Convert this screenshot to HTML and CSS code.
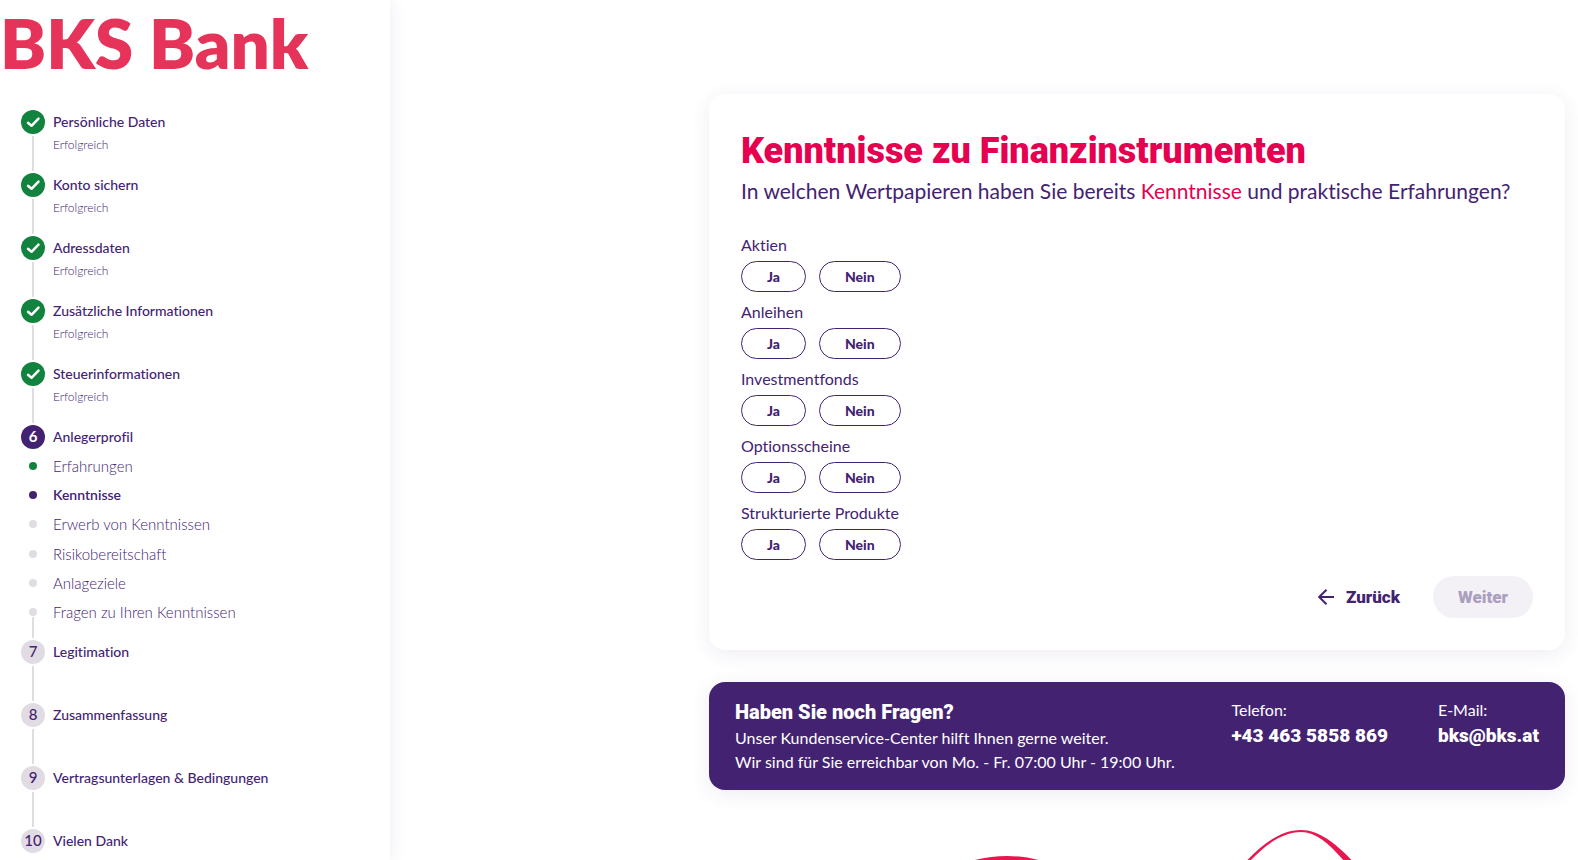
FILE: index.html
```html
<!DOCTYPE html>
<html lang="de">
<head>
    <meta charset="UTF-8">
    <meta name="viewport" content="width=device-width, initial-scale=1.0">
    <title>BKS Bank - Kenntnisse zu Finanzinstrumenten</title>
    <link rel="stylesheet" href="styles.css">
</head>
<body>
    <aside class="sidebar">
        <div class="logo">BKS Bank</div>
        <ol class="steps">
            <li class="step done">
                <span class="step-icon"><svg viewBox="0 0 24 24"><path d="M7 12.800l3.500 3 7-7.200"/></svg></span>
                <div class="step-text">
                    <span class="step-title">Persönliche Daten</span>
                    <span class="step-status">Erfolgreich</span>
                </div>
            </li>
            <li class="step done">
                <span class="step-icon"><svg viewBox="0 0 24 24"><path d="M7 12.800l3.500 3 7-7.200"/></svg></span>
                <div class="step-text">
                    <span class="step-title">Konto sichern</span>
                    <span class="step-status">Erfolgreich</span>
                </div>
            </li>
            <li class="step done">
                <span class="step-icon"><svg viewBox="0 0 24 24"><path d="M7 12.800l3.500 3 7-7.200"/></svg></span>
                <div class="step-text">
                    <span class="step-title">Adressdaten</span>
                    <span class="step-status">Erfolgreich</span>
                </div>
            </li>
            <li class="step done">
                <span class="step-icon"><svg viewBox="0 0 24 24"><path d="M7 12.800l3.500 3 7-7.200"/></svg></span>
                <div class="step-text">
                    <span class="step-title">Zusätzliche Informationen</span>
                    <span class="step-status">Erfolgreich</span>
                </div>
            </li>
            <li class="step done">
                <span class="step-icon"><svg viewBox="0 0 24 24"><path d="M7 12.800l3.500 3 7-7.200"/></svg></span>
                <div class="step-text">
                    <span class="step-title">Steuerinformationen</span>
                    <span class="step-status">Erfolgreich</span>
                </div>
            </li>
            <li class="step active">
                <span class="step-icon">6</span>
                <div class="step-text">
                    <span class="step-title">Anlegerprofil</span>
                </div>
                <ul class="substeps">
                    <li class="substep visited">Erfahrungen</li>
                    <li class="substep current">Kenntnisse</li>
                    <li class="substep">Erwerb von Kenntnissen</li>
                    <li class="substep">Risikobereitschaft</li>
                    <li class="substep">Anlageziele</li>
                    <li class="substep">Fragen zu Ihren Kenntnissen</li>
                </ul>
            </li>
            <li class="step">
                <span class="step-icon">7</span>
                <div class="step-text"><span class="step-title">Legitimation</span></div>
            </li>
            <li class="step">
                <span class="step-icon">8</span>
                <div class="step-text"><span class="step-title">Zusammenfassung</span></div>
            </li>
            <li class="step">
                <span class="step-icon">9</span>
                <div class="step-text"><span class="step-title">Vertragsunterlagen &amp; Bedingungen</span></div>
            </li>
            <li class="step">
                <span class="step-icon">10</span>
                <div class="step-text"><span class="step-title">Vielen Dank</span></div>
            </li>
        </ol>
    </aside>

    <main class="content">
        <form class="card">
            <h1>Kenntnisse zu Finanzinstrumenten</h1>
            <p class="question">In welchen Wertpapieren haben Sie bereits <a href="#">Kenntnisse</a> und praktische Erfahrungen?</p>

            <fieldset>
                <legend>Aktien</legend>
                <div class="choices">
                    <button type="button" class="choice">Ja</button>
                    <button type="button" class="choice">Nein</button>
                </div>
            </fieldset>
            <fieldset>
                <legend>Anleihen</legend>
                <div class="choices">
                    <button type="button" class="choice">Ja</button>
                    <button type="button" class="choice">Nein</button>
                </div>
            </fieldset>
            <fieldset>
                <legend>Investmentfonds</legend>
                <div class="choices">
                    <button type="button" class="choice">Ja</button>
                    <button type="button" class="choice">Nein</button>
                </div>
            </fieldset>
            <fieldset>
                <legend>Optionsscheine</legend>
                <div class="choices">
                    <button type="button" class="choice">Ja</button>
                    <button type="button" class="choice">Nein</button>
                </div>
            </fieldset>
            <fieldset>
                <legend>Strukturierte Produkte</legend>
                <div class="choices">
                    <button type="button" class="choice">Ja</button>
                    <button type="button" class="choice">Nein</button>
                </div>
            </fieldset>

            <div class="actions">
                <button type="button" class="back">
                    <svg viewBox="0 0 16 16"><path d="M16 8H1M8.500.7L1.200 8l7.300 7.300"/></svg>
                    Zurück
                </button>
                <button type="submit" class="next" disabled>Weiter</button>
            </div>
        </form>

        <section class="help">
            <div class="help-text">
                <h2>Haben Sie noch Fragen?</h2>
                <p>Unser Kundenservice-Center hilft Ihnen gerne weiter.</p>
                <p>Wir sind für Sie erreichbar von Mo. - Fr. 07:00 Uhr - 19:00 Uhr.</p>
            </div>
            <div class="contact">
                <span>Telefon:</span>
                <a href="tel:+434635858869">+43 463 5858 869</a>
            </div>
            <div class="contact">
                <span>E-Mail:</span>
                <a href="mailto:bks@bks.at">bks@bks.at</a>
            </div>
        </section>

        <svg class="ribbon" viewBox="0 0 856 38">
            <path d="M225 52C250 41 275 34 298 34S345 41 370 52Z"/>
            <path d="M526 52C546 28 568 8 592 8C616 8 640 33 660 59L650 57C628 30 612 10 592 10C570 10 548 29 530 52Z"/>
        </svg>
    </main>
</body>
</html>
```
FILE: styles.css
```css
* {
    box-sizing: border-box;
}
body {
    margin: 0;
    display: flex;
    min-height: 100vh;
    font-family: Lato, sans-serif;
    font-size: 16px;
    font-variant-ligatures: none;
    line-height: 24px;
    color: #432371;
    background-color: #fff;
}
h1, h2, p, ol, ul, fieldset {
    margin: 0;
    padding: 0;
}
button {
    font-family: inherit;
    cursor: pointer;
}

/* sidebar */
.sidebar {
    flex: 0 0 390px;
    box-shadow: 0 0 16px rgba(67, 35, 113, 0.1);
}
.logo {
    height: 110px;
    font-size: 69px;
    font-weight: 800;
    line-height: 86px;
    color: #e53359;
    white-space: nowrap;
}
.steps {
    padding: 0 21px;
    list-style: none;
}
.step {
    display: grid;
    grid-template-columns: 24px 1fr;
    grid-template-rows: 24px auto;
    column-gap: 8px;
    min-height: 63px;
    position: relative;
}
.step-icon {
    width: 24px;
    height: 24px;
    border-radius: 50%;
    background-color: #e1dce4;
    font-size: 15px;
    font-weight: 500;
    line-height: 23px;
    text-align: center;
}
.step-icon svg {
    display: block;
    fill: none;
    stroke: #fff;
    stroke-width: 2.500;
    stroke-linecap: round;
    stroke-linejoin: round;
}
.step::after {
    content: "";
    position: absolute;
    left: 11px;
    bottom: 2px;
    width: 2px;
    height: 35px;
    background-color: #e1dce4;
}
.step:last-child {
    min-height: 24px;
}
.step:last-child::after {
    display: none;
}
.done .step-icon {
    background-color: #12823f;
}
.active .step-icon {
    background-color: #432371;
    color: #fff;
    font-weight: bold;
}
.step.active::after {
    height: 21px;
}
.step-text {
    display: flex;
    flex-direction: column;
}
.step-title {
    font-size: 14px;
    font-weight: 500;
    line-height: 24px;
}
.step-status {
    font-size: 12px;
    font-weight: 300;
    line-height: 22px;
}
.substeps {
    grid-column: 1 / 3;
    display: grid;
    grid-auto-rows: 1fr;
    height: 176px;
    margin: 2px 0 13px;
    list-style: none;
}
.substep {
    display: flex;
    align-items: center;
    gap: 16px;
    padding-left: 8px;
    font-size: 15px;
    font-weight: 300;
}
.substep::before {
    content: "";
    width: 8px;
    height: 8px;
    border-radius: 50%;
    background-color: #e1dce4;
}
.substep.visited::before {
    background-color: #12823f;
}
.substep.current {
    font-size: 14px;
    font-weight: 600;
}
.substep.current::before {
    background-color: #432371;
}

/* main column */
.content {
    flex: 1;
    padding: 94px 13px 0 319px;
}
.card {
    padding: 37px 32px 32px;
    border-radius: 16px;
    background-color: #fff;
    box-shadow: 0 4px 20px rgba(67, 35, 113, 0.09);
}
h1 {
    font-family: Roboto, sans-serif;
    font-size: 36px;
    font-weight: 900;
    line-height: 40px;
    color: #e60050;
}
.question {
    margin-bottom: 22px;
    font-size: 21px;
    line-height: 40px;
}
.question a {
    color: #e60050;
    text-decoration: none;
}
fieldset {
    height: 67px;
    border: 0;
}
legend {
    padding: 0;
    line-height: 24px;
}
.choices {
    display: flex;
    gap: 13px;
    padding-top: 4px;
}
.choice {
    height: 31px;
    padding: 0 25px;
    border: 1px solid #432371;
    border-radius: 16px;
    background-color: #fff;
    color: #432371;
    font-size: 14px;
    font-weight: 900;
}
.actions {
    display: flex;
    justify-content: flex-end;
    gap: 33px;
    margin-top: 8px;
}
.back, .next {
    height: 42px;
    border: 0;
    font-family: Roboto, sans-serif;
    font-size: 17px;
    font-weight: 900;
}
.back {
    display: flex;
    align-items: center;
    gap: 12px;
    padding: 0;
    background: none;
    color: #432371;
}
.back svg {
    width: 16px;
    height: 16px;
    fill: none;
    stroke: #432371;
    stroke-width: 2;
}
.next {
    padding: 0 25px;
    border-radius: 21px;
    background-color: #f3f0f6;
    color: #ab9fc0;
}

/* contact box */
.help {
    display: flex;
    margin-top: 32px;
    padding: 16px 26px;
    border-radius: 16px;
    background-color: #432371;
    color: #fff;
    box-shadow: 0 4px 20px rgba(67, 35, 113, 0.09);
}
.help-text {
    flex: 1;
}
.help h2 {
    font-family: Roboto, sans-serif;
    font-size: 20px;
    font-weight: 900;
    line-height: 28px;
}
.contact {
    display: flex;
    flex-direction: column;
    margin-left: 50px;
}
.contact a {
    color: #fff;
    font-family: Roboto, sans-serif;
    font-size: 19px;
    font-weight: 900;
    line-height: 28px;
    text-decoration: none;
}
.ribbon {
    display: block;
    width: 100%;
    margin-top: 32px;
    fill: #e8174f;
}
```
